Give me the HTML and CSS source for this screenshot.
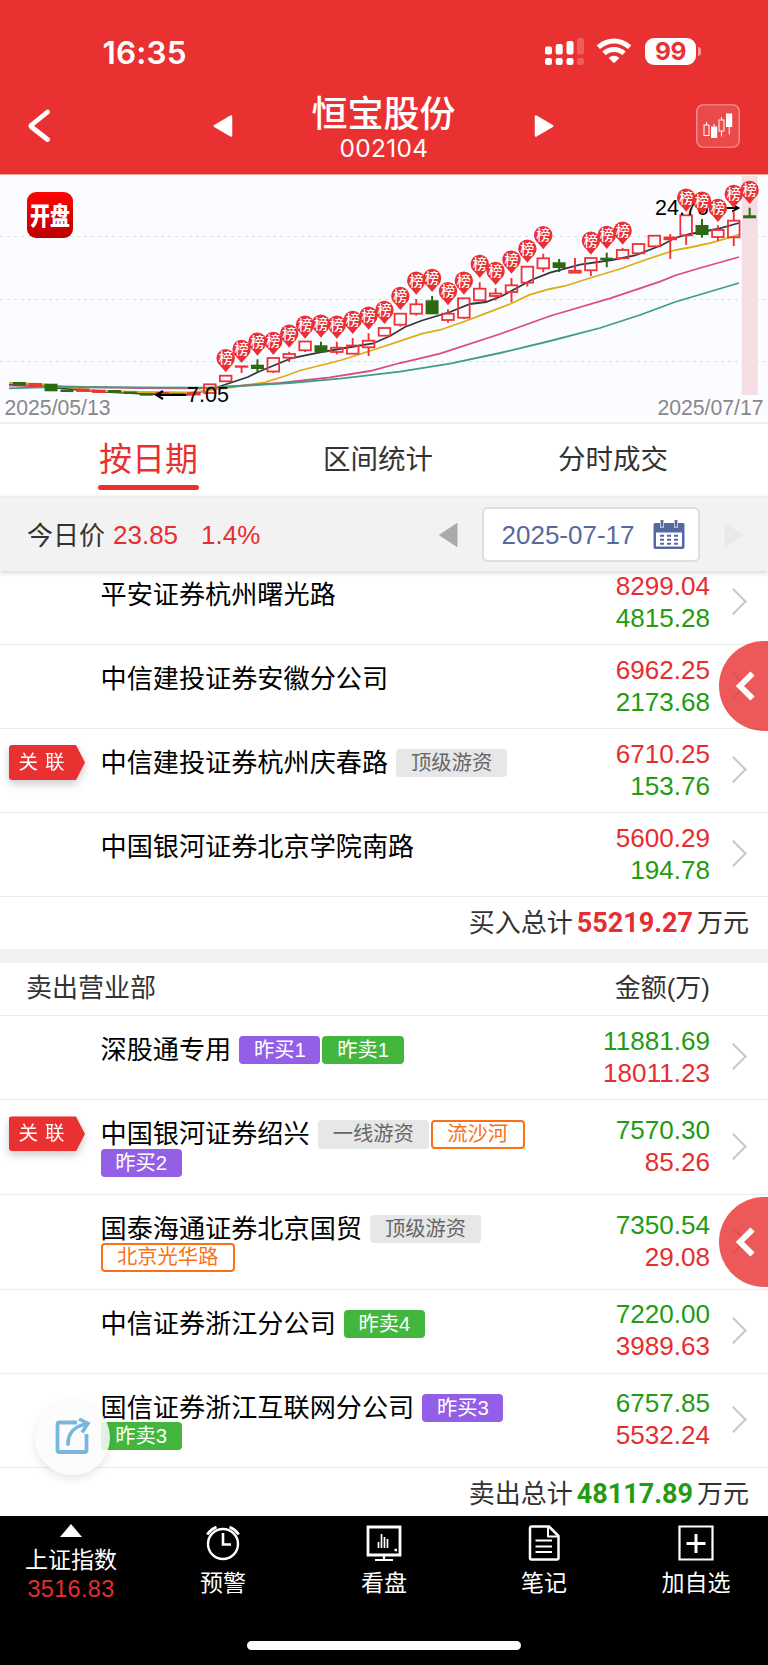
FILE: index.html
```
<!DOCTYPE html>
<html lang="zh-CN">
<head>
<meta charset="utf-8">
<title>恒宝股份 002104</title>
<link rel="stylesheet" href="styles.css">
</head>
<body>
<div class="app">
  <header class="header">
    <div class="status">
      <span class="clock">16:35</span>
      <div class="status-icons">
        <svg class="signal" width="40" height="28" viewBox="0 0 40 28" fill="#fff">
          <rect x="0" y="8.5" width="7" height="8" rx="2"/><rect x="10.7" y="6" width="7" height="10.5" rx="2"/><rect x="21.5" y="3" width="7" height="13.5" rx="2"/><rect x="32" y="0" width="7" height="16.5" rx="2" opacity=".22"/>
          <rect x="0" y="20" width="7" height="7" rx="2.2"/><rect x="10.7" y="20" width="7" height="7" rx="2.2"/><rect x="21.5" y="20" width="7" height="7" rx="2.2"/><rect x="32" y="20" width="7" height="7" rx="2.2" opacity=".22"/>
        </svg>
        <svg class="wifi" width="36" height="26" viewBox="0 0 36 26" fill="none" stroke="#fff" stroke-width="5">
          <path d="M2.3 9.2Q9.5 3 18 3T33.700 9.200"/><path d="M8 15.300Q12.300 11.400 18 11.400T28 15.300"/><path d="M18 25.300L12.700 20Q15 17.700 18 17.700T23.300 20Z" fill="#fff" stroke="none"/>
        </svg>
        <span class="battery">99</span><i class="battery-cap"></i>
      </div>
    </div>
    <div class="titlebar">
      <svg class="back" width="24" height="34" viewBox="0 0 24 34" fill="none" stroke="#fff" stroke-width="4.800" stroke-linecap="round" stroke-linejoin="round"><path d="M20.500 3L4.500 16q-1 1 0 2L20.500 30.500"/></svg>
      <svg class="prev" width="20" height="24" viewBox="0 0 20 24"><path d="M1.800 12L18 2.500V21.500Z" fill="#fff" stroke="#fff" stroke-width="2.500" stroke-linejoin="round"/></svg>
      <div class="title"><h1>恒宝股份</h1><span>002104</span></div>
      <svg class="next" width="20" height="24" viewBox="0 0 20 24"><path d="M18.200 12L2 2.500V21.500Z" fill="#fff" stroke="#fff" stroke-width="2.500" stroke-linejoin="round"/></svg>
      <svg class="kline" width="44" height="44" viewBox="0 0 44 44">
        <rect x=".75" y=".75" width="42.500" height="42.500" rx="6.500" fill="#fff" fill-opacity=".12" stroke="#fff" stroke-opacity=".5" stroke-width="1.200"/>
        <g fill="none" stroke="#fff" stroke-width="1"><path d="M10.500 18v3M18.200 20v4M25.500 13v3M25.500 27.500v5M33.200 23v7.500"/><rect x="8" y="21" width="5" height="10.500"/><rect x="23" y="16" width="5" height="11"/></g>
        <path d="M15 22.500h6.200V34H15zM30 9.500h6.200V23H30z" fill="#fff"/>
      </svg>
    </div>
  </header>

  <section class="chart"><svg id="chart" width="768" height="248" viewBox="0 175 768 248"></svg></section>

  <nav class="tabs"><span class="tab active">按日期</span><span class="tab">区间统计</span><span class="tab">分时成交</span></nav>

  <section class="quote">
    <span class="quote-label">今日价</span><span class="price">23.85</span><span class="change">1.4%</span>
    <svg class="day-prev" width="20" height="26" viewBox="0 0 20 26"><path d="M1.500 13L19 1.500V24.500Z" fill="#aaa" stroke="#aaa" stroke-linejoin="round"/></svg>
    <div class="date-input"><span>2025-07-17</span>
      <svg width="32" height="30" viewBox="0 0 32 30"><path d="M2 3h28a1.500 1.500 0 0 1 1.500 1.500V27a2 2 0 0 1-2 2h-27a2 2 0 0 1-2-2V4.500A1.500 1.500 0 0 1 2 3z" fill="#56699f"/><path d="M3 12.500h26V26.500H3z" fill="#fff"/><path d="M9 0v7.500M23 0v7.500" stroke="#fff" stroke-width="4"/><path d="M9 0v6.800M23 0v6.800" stroke="#56699f" stroke-width="2.800"/><path d="M7 15.800h4M14 15.800h4M21 15.800h4M7 19.800h4M14 19.800h4M21 19.800h4M7 23.800h4M14 23.800h4M21 23.800h4" stroke="#56699f" stroke-width="2"/></svg>
    </div>
    <svg class="day-next" width="20" height="26" viewBox="0 0 20 26"><path d="M18.500 13L1 1.500V24.500Z" fill="#e9e9e9" stroke="#e9e9e9" stroke-linejoin="round"/></svg>
  </section>

  <main class="lists">
    <section class="buy">
      <div class="row"><div class="rel"></div><div class="name">平安证券杭州曙光路</div><div class="amount"><b class="up">8299.04</b><b class="down">4815.28</b></div><i class="chev"></i></div>
      <div class="row"><div class="rel"></div><div class="name">中信建投证券安徽分公司</div><div class="amount"><b class="up">6962.25</b><b class="down">2173.68</b></div><i class="chev"></i></div>
      <div class="row"><div class="rel"><span class="badge"><em>关联</em></span></div><div class="name">中信建投证券杭州庆春路<span class="tag gray first">顶级游资</span></div><div class="amount"><b class="up">6710.25</b><b class="down">153.76</b></div><i class="chev"></i></div>
      <div class="row"><div class="rel"></div><div class="name">中国银河证券北京学院南路</div><div class="amount"><b class="up">5600.29</b><b class="down">194.78</b></div><i class="chev"></i></div>
      <div class="total">买入总计<strong class="up">55219.27</strong>万元</div>
    </section>
    <section class="sell">
      <div class="list-head"><span>卖出营业部</span><span>金额(万)</span></div>
      <div class="row first-row"><div class="rel"></div><div class="name">深股通专用<span class="tag purple first">昨买1</span><span class="tag green">昨卖1</span></div><div class="amount"><b class="down">11881.69</b><b class="up">18011.23</b></div><i class="chev"></i></div>
      <div class="row tall"><div class="rel"><span class="badge"><em>关联</em></span></div><div class="name">中国银河证券绍兴<span class="tag gray first">一线游资</span><span class="tag orange">流沙河</span><br><span class="tag purple">昨买2</span></div><div class="amount"><b class="down">7570.30</b><b class="up">85.26</b></div><i class="chev"></i></div>
      <div class="row tall"><div class="rel"></div><div class="name">国泰海通证券北京国贸<span class="tag gray first">顶级游资</span><br><span class="tag orange">北京光华路</span></div><div class="amount"><b class="down">7350.54</b><b class="up">29.08</b></div><i class="chev"></i></div>
      <div class="row"><div class="rel"></div><div class="name">中信证券浙江分公司<span class="tag green first">昨卖4</span></div><div class="amount"><b class="down">7220.00</b><b class="up">3989.63</b></div><i class="chev"></i></div>
      <div class="row tall"><div class="rel"></div><div class="name">国信证券浙江互联网分公司<span class="tag purple first">昨买3</span><br><span class="tag green">昨卖3</span></div><div class="amount"><b class="down">6757.85</b><b class="up">5532.24</b></div><i class="chev"></i></div>
      <div class="total sell-total">卖出总计<strong class="down">48117.89</strong>万元</div>
    </section>
    <div class="drawer drawer-buy"><svg width="20" height="30" viewBox="0 0 20 30"><path d="M17.500 2.500L5 15L17.500 27.500" fill="none" stroke="#fff" stroke-width="6"/></svg></div>
    <div class="drawer drawer-sell"><svg width="20" height="30" viewBox="0 0 20 30"><path d="M17.500 2.500L5 15L17.500 27.500" fill="none" stroke="#fff" stroke-width="6"/></svg></div>
    <div class="share"><svg width="38" height="38" viewBox="0 0 38 38" fill="none" stroke="#78b7dc" stroke-width="3.800"><path d="M24 4.500H6.500a2 2 0 0 0-2 2V32a2 2 0 0 0 2 2H31.500a2 2 0 0 0 2-2V16"/><path d="M15 26C15 15.500 21.500 8 33.500 6" stroke-linecap="round"/><path d="M26 1L35 5.500L29 14.500" stroke-width="3.500"/></svg></div>
  </main>

  <footer class="nav">
    <div class="nav-item index"><i class="caret"></i><span>上证指数</span><span class="index-value">3516.83</span></div>
    <div class="nav-item"><svg width="36" height="36" viewBox="0 0 36 36" fill="none" stroke="#fff"><circle cx="18" cy="19" r="15" stroke-width="2.400"/><path d="M18 8V19.500H26M2.200 9.500Q5.500 4.500 11.500 2M33.800 9.500Q30.500 4.500 24.500 2" stroke-width="2.600"/></svg><span>预警</span></div>
    <div class="nav-item"><svg width="36" height="36" viewBox="0 0 36 36" fill="none" stroke="#fff"><path d="M2 2H34V30H2Z" stroke-width="2.800"/><path d="M9 35H27M18 31v3" stroke-width="2.200"/><path d="M12.500 23v-6M15.500 23V9M18.500 23V12M21.500 23v-9" stroke-width="1.700"/><path d="M28.500 25h2.500" stroke-width="2.500"/></svg><span>看盘</span></div>
    <div class="nav-item"><svg width="36" height="36" viewBox="0 0 36 36" fill="none" stroke="#fff" stroke-linejoin="round"><path d="M5.500 1.500H23L32.500 11V33a1.500 1.500 0 0 1-1.500 1.500H5.500A1.500 1.500 0 0 1 4 33V3a1.500 1.500 0 0 1 1.500-1.500Z" stroke-width="2.500"/><path d="M22 2V11.500H32" stroke-width="2"/><path d="M9.500 15.500H26M9.500 21.500H26M9.500 27H26" stroke-width="1.900"/></svg><span>笔记</span></div>
    <div class="nav-item"><svg width="36" height="36" viewBox="0 0 36 36" fill="none" stroke="#fff"><path d="M1.500 1.500H34.500V34.500H1.500Z" stroke-width="2.200"/><path d="M8.500 18.500H27.500M18 9V28" stroke-width="3"/></svg><span>加自选</span></div>
    <i class="home-bar"></i>
  </footer>
</div>
<script src="chart.js"></script>
</body>
</html>
```
FILE: styles.css
```
* { box-sizing: border-box; }
body { margin: 0; background: #fff; font-family: "Liberation Sans", "Noto Sans CJK SC", sans-serif; color: #000; }
.app { width: 768px; height: 1665px; overflow: hidden; display: flex; flex-direction: column; }
i, em { font-style: normal; }
b { font-weight: 400; }
svg { display: block; flex: none; }
.up { color: #e52e30; }
.down { color: #239b12; }

.header { height: 175px; background: #e93131; border-bottom: 1px solid #f2a0a0; color: #fff; flex: none; }
.status { display: flex; align-items: flex-start; padding: 33px 0 0 102.500px; height: 90px; }
.clock { width: 442.500px; font: 600 31.500px/40px Inter, sans-serif; letter-spacing: .2px; }
.status-icons { display: flex; padding-top: 5px; }
.wifi { margin: 0 0 0 11px; }
.battery { width: 51px; height: 27px; margin-left: 13px; border-radius: 9px; background: #fff; color: #e93131; text-align: center; font: 700 24.500px/27.500px Inter, sans-serif; letter-spacing: -.5px; }
.battery-cap { width: 3px; height: 9px; margin: 9px 0 0 1.500px; border-radius: 0 4px 4px 0; background: rgba(255,255,255,.5); }
.titlebar { display: flex; align-items: flex-start; }
.back { margin: 18.500px 0 0 27px; }
.prev { margin: 24px 0 0 162px; }
.title { width: 301px; text-align: center; }
.title h1 { margin: 0; font: 500 36px/43px "Noto Sans CJK SC", sans-serif; }
.title span { display: block; padding-left: 1px; font: 400 24.500px/30px Inter, sans-serif; letter-spacing: .3px; }
.next { margin-top: 24px; }
.kline { margin: 14px 0 0 142px; }

.chart { height: 249px; background: #fbfcff; border-bottom: 2px solid #f0f0f4; flex: none; }

.tabs { height: 72px; display: grid; grid-template-columns: 297px 162px 308px; justify-items: center; font-size: 27.500px; line-height: 72px; color: #333; flex: none; }
.tab.active { position: relative; width: 101px; height: 67px; color: #e93131; font-size: 33px; text-align: center; white-space: nowrap; }
.tab.active::after { content: ""; position: absolute; left: 0; right: 0; bottom: 1px; height: 5px; border-radius: 3px; background: #e93131; }

.quote { height: 75px; flex: none; display: flex; align-items: center; padding-left: 27px; background: #f2f2f2; border-top: 2px solid #eee; box-shadow: 0 2px 5px rgba(0,0,0,.16); font-size: 26px; color: #333; position: relative; z-index: 2; }
.quote-label { padding-bottom: 3px; }
.price, .change { color: #e52e30; padding-top: 1px; }
.price { width: 88px; margin-left: 8px; }
.change { width: 237px; }
.date-input { width: 218px; height: 55px; margin-left: 24px; padding: 1px 13px 0 17.500px; display: flex; align-items: center; justify-content: space-between; border: 2px solid #dedede; border-radius: 6px; background: #fff; color: #56699f; }
.day-next { margin-left: 24px; }

.lists { position: relative; height: 955px; margin-top: -10px; flex: none; }
.row { height: 84px; display: grid; grid-template-columns: 100.500px 1fr 140px 58px; border-bottom: 1px solid #ececec; }
.row.first-row { height: 84.700px; }
.row.tall { height: 94.600px; }
.name { padding-top: 20px; font-size: 26.150px; line-height: 28.400px; white-space: nowrap; }
.tag { display: inline-block; vertical-align: top; height: 28.300px; padding: 0 15px; margin-right: 2px; border-radius: 4px; font-size: 20.300px; line-height: 28px; color: #fff; }
.tag.first { margin-left: 8px; }
.gray { background: #e7e7e7; color: #666; }
.purple { background: #935fe6; padding: 0 14.700px; }
.green { background: #43b63d; padding: 0 14.700px; }
.orange { border: 2px solid #fb7016; color: #fb7016; line-height: 24px; padding: 0 14.500px; }
.badge { display: block; width: 76px; height: 35px; margin: 16px 0 0 9px; filter: drop-shadow(0 4px 4px rgba(0,0,0,.2)); }
.badge em { display: block; height: 35px; padding-left: 9.500px; background: #e93131; color: #fff; font-size: 19.500px; line-height: 35px; letter-spacing: 7px; border-radius: 3px; clip-path: polygon(0 0, 67px 0, 100% 50%, 67px 100%, 0 100%); }
.amount { align-self: center; padding-bottom: 2px; text-align: right; font-size: 26.100px; line-height: 32px; }
.amount b { display: block; }
.chev { align-self: center; width: 19px; height: 19px; margin: 0 0 2px 14px; border: solid #c8c8c8; border-width: 2.500px 2.500px 0 0; transform: rotate(45deg); }
.total { height: 52px; padding-right: 19px; text-align: right; font-size: 26px; line-height: 53px; color: #333; }
.total strong { font: 700 27px/53px Roboto, sans-serif; margin: 0 4px; }
.sell { border-top: 14px solid #f2f2f2; }
.list-head { height: 52.700px; padding: 0 58px 0 26px; display: flex; justify-content: space-between; border-bottom: 1px solid #ececec; font-size: 26px; line-height: 50px; color: #333; }
.sell-total { height: 48px; }

.drawer { position: absolute; right: 0; width: 49px; height: 90px; padding: 30px 0 0 15.500px; border-radius: 45px 0 0 45px; background: rgba(233,46,46,.8); }
.drawer-buy { top: 80px; }
.drawer-sell { top: 636px; }
.share { position: absolute; left: 35px; top: 839px; width: 75px; height: 75px; padding: 18px; border-radius: 50%; background: rgba(251,251,251,.85); box-shadow: 0 4px 10px rgba(0,0,0,.1); }

.nav { position: relative; height: 149px; flex: none; display: grid; grid-template-columns: 142px 162px 160px 160px 144px; background: #000; color: #fff; font-size: 23px; }
.nav-item { display: flex; flex-direction: column; align-items: center; padding-top: 9px; line-height: 44px; }
.nav-item.index { padding-top: 8px; line-height: 30px; }
.caret { width: 0; height: 0; border: solid transparent; border-width: 0 11.500px 13px; border-bottom-color: #fff; margin-bottom: 8px; }
.index-value { color: #e52e30; font-size: 23.500px; line-height: 29px; letter-spacing: .3px; }
.home-bar { position: absolute; left: 247px; top: 125px; width: 274px; height: 9px; border-radius: 5px; background: #fff; }

.date { font: 21.200px "Liberation Sans", sans-serif; fill: #888; }
.mark { font: 21.500px "Liberation Sans", sans-serif; fill: #000; }
.pin-text { font: 500 14px "Noto Sans CJK SC", sans-serif; fill: #fff; }
.logo-text { font: 900 20px "Noto Sans CJK SC", sans-serif; fill: #fff; }
```
FILE: chart.js
```
// Daily candles: [direction, body top, body bottom, wick top, wick bottom, pin centre]
const candles = [
  ['d',382,385.7],['u',384,386],['d',383.7,391.3],['d',389.500,392],['u',389.6,391],['u',390.600,392],
  ['d',390,392.700],['d',391.500,394],['d',393,395.700],['u',393,394],['d',393.500,395],['u',393,394.500],
  ['u',384.300,393],['u',375.700,381.300,0,0,358.300],['u',366.300,366.800,366,373,349],
  ['d',364.700,369,359.300,372.300,341.700],['u',358,371.500,358,373,341],['u',354,357.700,351.700,362,333.700],
  ['u',341.500,350.300,341,352,324.700],['d',345.300,352.300,341.700,352,323.700],['u',347.700,352,341.700,354.500,324.700],
  ['u',345.500,353.700,338,354,320],['u',340.700,347.300,333.300,356,315.700],['u',328,335.700,0,0,310],
  ['u',313.700,324.700,313.700,326.500,296],['u',304.300,313.700,299,315.500,280.700],['d',300.300,314.300,296,314,278],
  ['u',313.700,320,309.300,322.700,291.300],['u',298.300,317.700,298,319,280.700],['u',288.700,300.300,282.300,301,264],
  ['u',293.500,296,288.300,300.500,271],['u',285.300,292,278,302.300,259.700],['u',266.700,282.700,266,286.500,248.700],
  ['u',258.300,268.300,253.700,272.300,235.300],['d',262.300,268,259,272],['u',270.800,272.700,258,273],
  ['u',258,270.300,258,276,240.700],['d',257.700,260,252.700,267.300,235],['u',250,258.300,248,259,230.700],
  ['u',244,253.300],['u',235.700,246.300],['u',237.500,239.300,234,259],['u',215.300,235.300,215,245,197.700],
  ['d',225,235,219,237.700,200.700],['u',230,237,225.300,240.700,208],['u',220.700,237.300,212,246,194],
  ['d',215.300,218.300,207.700,218,190]
];
const averages = {
  '#35353a': '9,384 60,388 100,391.5 150,394 190,394.5 212,389 230,383 248,377 258,372 292,358 320,352.3 345,348 373,343.5 390,336 405,327 422,320.5 450,312 470,304 486,302 502,296 532,279.7 550,272.7 580,264.7 612,260 635,255.5 662,245 675,238 690,234 717,229 739,223',
  '#dcae13': '9,383 40,384 100,391 140,392 190,392.3 205,391 230,387.5 265,382.3 285,376 300,370.5 340,360.5 373,350 405,339.3 422,333.7 440,330 463,322 485,313.7 510,304 530,294.7 550,289 565,286 590,278 620,269 645,260 675,250 692,247 712,242.7 739,234.7',
  '#db4a86': '9,385.5 60,386.5 140,388 200,388.3 230,386.5 280,383 330,377.3 370,371 400,363 440,353.7 500,334 550,316 610,298.3 660,281.7 675,275.5 700,268 739,257',
  '#3d9f7f': '9,388.3 50,387 130,387.3 210,387.7 240,386 290,383 340,378.7 400,371.7 450,363.7 500,353 550,341 600,328 640,315 675,302 739,283'
};
let out = '<defs><linearGradient id="red" x2="0" y2="1"><stop stop-color="#ff0505"/><stop offset="1" stop-color="#b90000"/></linearGradient></defs>';
for (const y of [236.5, 299.5, 361.500]) out += `<path d="M0 ${y}H768" stroke="#dcdde0" stroke-width="1" stroke-dasharray="3 4"/>`;
out += '<rect x="741.7" y="176" width="16" height="219" fill="#f5dde4"/>';
const x = i => 19.3 + 15.877 * i;
for (const [color, pts] of Object.entries(averages)) out += `<polyline points="${pts}" fill="none" stroke="${color}" stroke-width="1.800"/>`;
candles.forEach(([dir, top, bottom, high, low], i) => {
  const c = dir === 'u' ? '#ee3237' : '#2c6a11', cx = x(i);
  if (dir === 'u') {
    if (high) out += `<path d="M${cx} ${high}V${Math.max(high, top)}M${cx} ${bottom}V${Math.max(low, bottom)}" stroke="${c}" stroke-width="1.900"/>`;
    out += `<rect x="${cx - 5.800}" y="${top}" width="11.600" height="${bottom - top}" fill="none" stroke="${c}" stroke-width="1.800"/>`;
  } else {
    if (high) out += `<path d="M${cx} ${high}V${low}" stroke="${c}" stroke-width="2"/>`;
    out += `<rect x="${cx - 6.500}" y="${top}" width="13" height="${bottom - top}" fill="${c}"/>`;
  }
});
out += '<text class="mark" x="655" y="214.500">24.76</text><path d="M712 208H738M732 204.500L738.500 208L732 211.500" fill="none" stroke="#000" stroke-width="1.800"/>';
out += '<path d="M186 395H157M163 391L156.500 395L163 399" fill="none" stroke="#000" stroke-width="2.200"/><text class="mark" x="187" y="402">7.05</text>';
candles.forEach((c, i) => {
  const y = c[5], cx = x(i);
  if (!y) return;
  out += `<path d="M${cx - 7.500} ${y + 5}L${cx} ${y + 14}L${cx + 7.500} ${y + 5}Z" fill="#e93034"/><circle cx="${cx}" cy="${y}" r="9.200" fill="#e93034"/><text class="pin-text" x="${cx}" y="${y + 5}" text-anchor="middle">榜</text>`;
});
out += '<rect x="27" y="192" width="46" height="46" rx="9" fill="url(#red)"/><text class="logo-text" transform="translate(50 224.500) scale(1 1.250)" text-anchor="middle">开盘</text>';
out += '<text class="date" x="4.500" y="415">2025/05/13</text><text class="date" x="763.500" y="415" text-anchor="end">2025/07/17</text>';
document.getElementById('chart').innerHTML = out;
```
